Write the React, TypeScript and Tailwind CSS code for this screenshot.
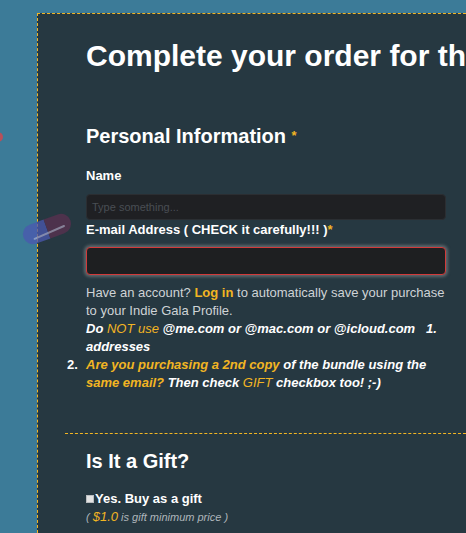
import React from "react";

const FONT = { fontFamily: '"Liberation Sans", Arial, sans-serif' };

const Pill = () => (
  <svg
    className="absolute left-[18px] top-[206px] opacity-75"
    width="58"
    height="46"
    viewBox="0 0 58 46"
  >
    <g transform="rotate(-20 29 23)">
      <path d="M29 13 H14 A10 10 0 0 0 14 33 H29 Z" fill="#4b58b0" />
      <path d="M29 13 H44 A10 10 0 0 1 44 33 H29 Z" fill="#5a3050" />
      <path d="M14 28 L46 26" stroke="#c8c8e0" strokeWidth="2" strokeLinecap="round" opacity="0.7" />
    </g>
  </svg>
);

export default function App() {
  return (
    <div
      className="relative h-[533px] w-[466px] overflow-hidden bg-[#3c7b98] pt-[13px] pl-[37px]"
      style={FONT}
    >
      {/* red blob on the edge */}
      <div className="absolute left-[-7px] top-[132px] h-[10px] w-[10px] rounded-full bg-[#b8505a]" />

      <div className="h-full border-l border-t border-dashed border-[#f2b523] bg-[#263841] pl-[48px] pr-[20px]">
        <h1 className="mt-[25px] whitespace-nowrap text-[30px] font-bold leading-[34px] text-white">
          Complete your order for the Indie Gala Bundle
        </h1>

        <h2 className="mt-[51px] text-[20px] font-bold leading-[24px] text-white">
          Personal Information <span className="align-top text-[13px] text-[#f2b523]">*</span>
        </h2>

        <label className="mt-[19px] block text-[13px] font-bold leading-[18px] text-white">Name</label>
        <div className="mt-[9px] flex h-[26px] items-center rounded-[4px] border border-[#2b2e32] bg-[#1f2023] px-[5px] text-[11px] text-[#494e54]">
          Type something...
        </div>

        <label className="mt-[1px] block text-[13px] font-bold leading-[18px] text-white">
          E-mail Address ( CHECK it carefully!!! )<span className="text-[#f2b523]">*</span>
        </label>
        <div className="mt-[8px] h-[28px] rounded-[4px] border border-[#d23a3a] bg-[#1e1f21] shadow-[0_0_3px_2px_rgba(150,150,150,0.5)]" />

        <div className="mt-[9px] text-[13px] leading-[18px] text-[#cfd3d6]">
          <p>
            Have an account? <span className="font-bold text-[#f2b523]">Log in</span> to automatically save
            your purchase to your Indie Gala Profile.
          </p>
          <p className="font-bold italic text-white">
            Do <span className="font-normal text-[#f2b523]">NOT use</span> @me.com or @mac.com or @icloud.com
            &nbsp;&nbsp;1.
            <br />
            addresses
          </p>
          <div className="ml-[-19px] flex font-bold italic text-white">
            <span className="w-[19px] shrink-0 not-italic">2.</span>
            <p>
              <span className="text-[#f2b523]">Are you purchasing a 2nd copy</span> of the bundle using the{" "}
              <span className="text-[#f2b523]">same email?</span> Then check{" "}
              <span className="font-normal text-[#f2b523]">GIFT</span> checkbox too! ;-)
            </p>
          </div>
        </div>

        <div className="ml-[-21px] mr-[-20px] mt-[41px] border-t border-dashed border-[#f2b523]" />

        <h2 className="mt-[15px] text-[20px] font-bold leading-[24px] text-white">Is It a Gift?</h2>

        <div className="mt-[17px] flex items-center text-[13px] font-bold leading-[18px] text-white">
          <span className="mr-[1px] inline-block h-[8px] w-[8px] border border-[#b9bdc0] bg-[#e2e2e2]" />
          Yes. Buy as a gift
        </div>
        <p className="text-[11px] italic leading-[18px] text-[#aeb6bb]">
          ( <span className="text-[13px] text-[#f2b523]">$1.0</span> is gift minimum price )
        </p>
      </div>

      <Pill />
    </div>
  );
}
